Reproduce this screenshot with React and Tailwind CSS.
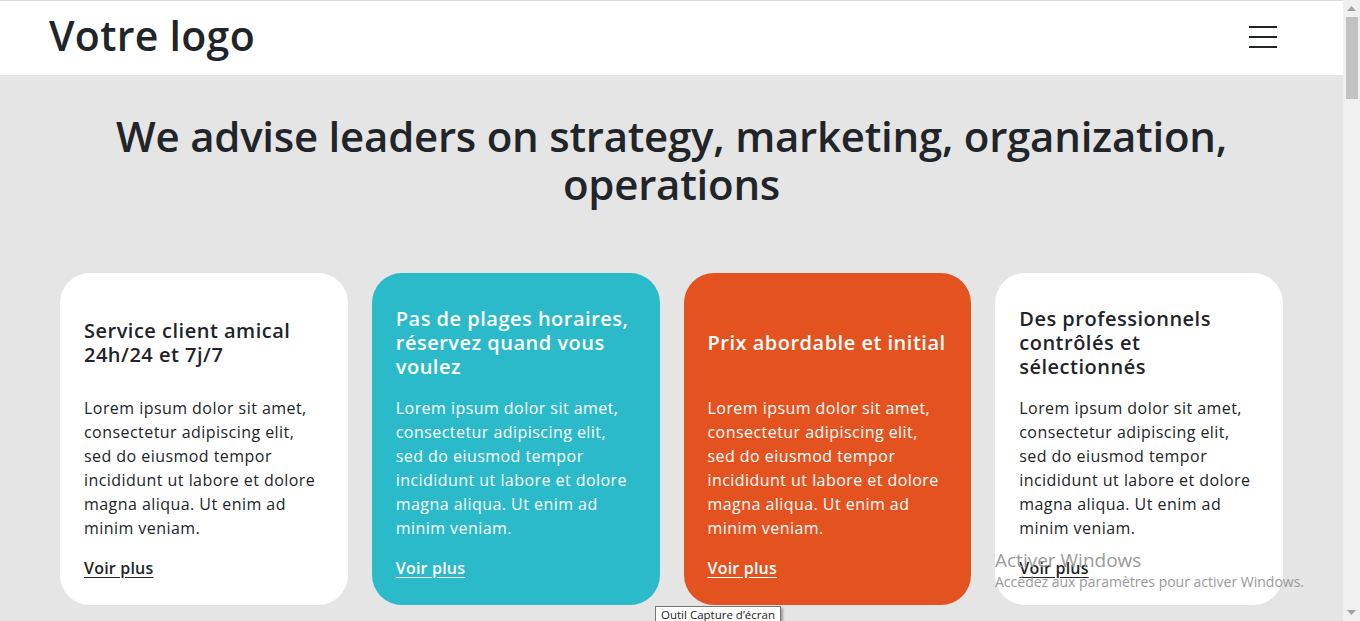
import React from "react";

const cards = [
  { title: "Service client amical 24h/24 et 7j/7", bg: "bg-white", text: "text-[#212529]" },
  { title: "Pas de plages horaires, réservez quand vous voulez", bg: "bg-[#2abac9]", text: "text-white" },
  { title: "Prix abordable et initial", bg: "bg-[#e4531f]", text: "text-white" },
  { title: "Des professionnels contrôlés et sélectionnés", bg: "bg-white", text: "text-[#212529]" },
];

export default function App() {
  return (
    <div className="relative h-[621px] w-[1360px] overflow-hidden bg-[#e5e5e5] flex" style={{ fontFamily: '"Open Sans", sans-serif' }}>
      <div className="flex-1 flex flex-col">
        <header className="h-[75px] bg-white border-t border-[#dcdcdc] flex items-center justify-between pl-[49px] pr-[66px]">
          <div className="text-[41px] font-semibold text-[#212529] tracking-[0.3px] leading-none -mt-[5px]">Votre logo</div>
          <div className="flex flex-col gap-[8px] -mt-[2px]">
            <span className="block w-[28px] h-[2px] bg-[#212529]" />
            <span className="block w-[28px] h-[2px] bg-[#212529]" />
            <span className="block w-[28px] h-[2px] bg-[#212529]" />
          </div>
        </header>
        <main className="flex flex-col items-center">
          <h1 className="mt-[37px] text-center text-[42px] font-semibold tracking-[-0.25px] leading-[48px] text-[#212529] max-w-[1180px]">
            We advise leaders on strategy, marketing, organization, operations
          </h1>
          <div className="mt-[65px] grid grid-cols-4 gap-[24px] w-[1223px]">
            {cards.map((c, i) => (
              <div key={i} className={`${c.bg} ${c.text} rounded-[30px] h-[332px] px-[24px] pt-[34px] flex flex-col`}>
                <div className="h-[72px] flex items-center">
                  <h2 className="text-[20px] font-semibold leading-[24px] tracking-[0.5px]">{c.title}</h2>
                </div>
                <p className="mt-[17px] text-[16px] leading-[24px] tracking-[0.45px]">
                  Lorem ipsum dolor sit amet, consectetur adipiscing elit, sed do eiusmod tempor incididunt ut labore et dolore magna aliqua. Ut enim ad minim veniam.
                </p>
                <a className="mt-[16px] text-[16px] font-semibold leading-[24px] tracking-[0.2px] underline underline-offset-[3px]">Voir plus</a>
              </div>
            ))}
          </div>
        </main>
      </div>
      <div className="w-[17px] h-full bg-[#f0f0f0] flex flex-col items-center">
        <div className="h-[17px] flex items-center justify-center">
          <svg width="9" height="5" viewBox="0 0 9 5"><path d="M0 5 L4.5 0 L9 5 Z" fill="#a3a3a3" /></svg>
        </div>
        <div className="w-[12px] h-[82px] bg-[#c1c1c1]" />
        <div className="flex-1" />
        <div className="h-[17px] flex items-center justify-center">
          <svg width="9" height="5" viewBox="0 0 9 5"><path d="M0 0 L4.5 5 L9 0 Z" fill="#a3a3a3" /></svg>
        </div>
      </div>
      <div className="absolute left-[995px] top-[548px] text-[#9a9a9a] pointer-events-none">
        <div className="text-[19px] leading-[24px]">Activer Windows</div>
        <div className="text-[14px] leading-[20px]">Accédez aux paramètres pour activer Windows.</div>
      </div>
      <div className="absolute left-[655px] top-[606px] border border-[#767676] bg-white px-[5px] text-[11.5px] leading-[15px] text-[#222] shadow-[2px_2px_2px_rgba(0,0,0,0.3)]">
        Outil Capture d’écran
      </div>
    </div>
  );
}
